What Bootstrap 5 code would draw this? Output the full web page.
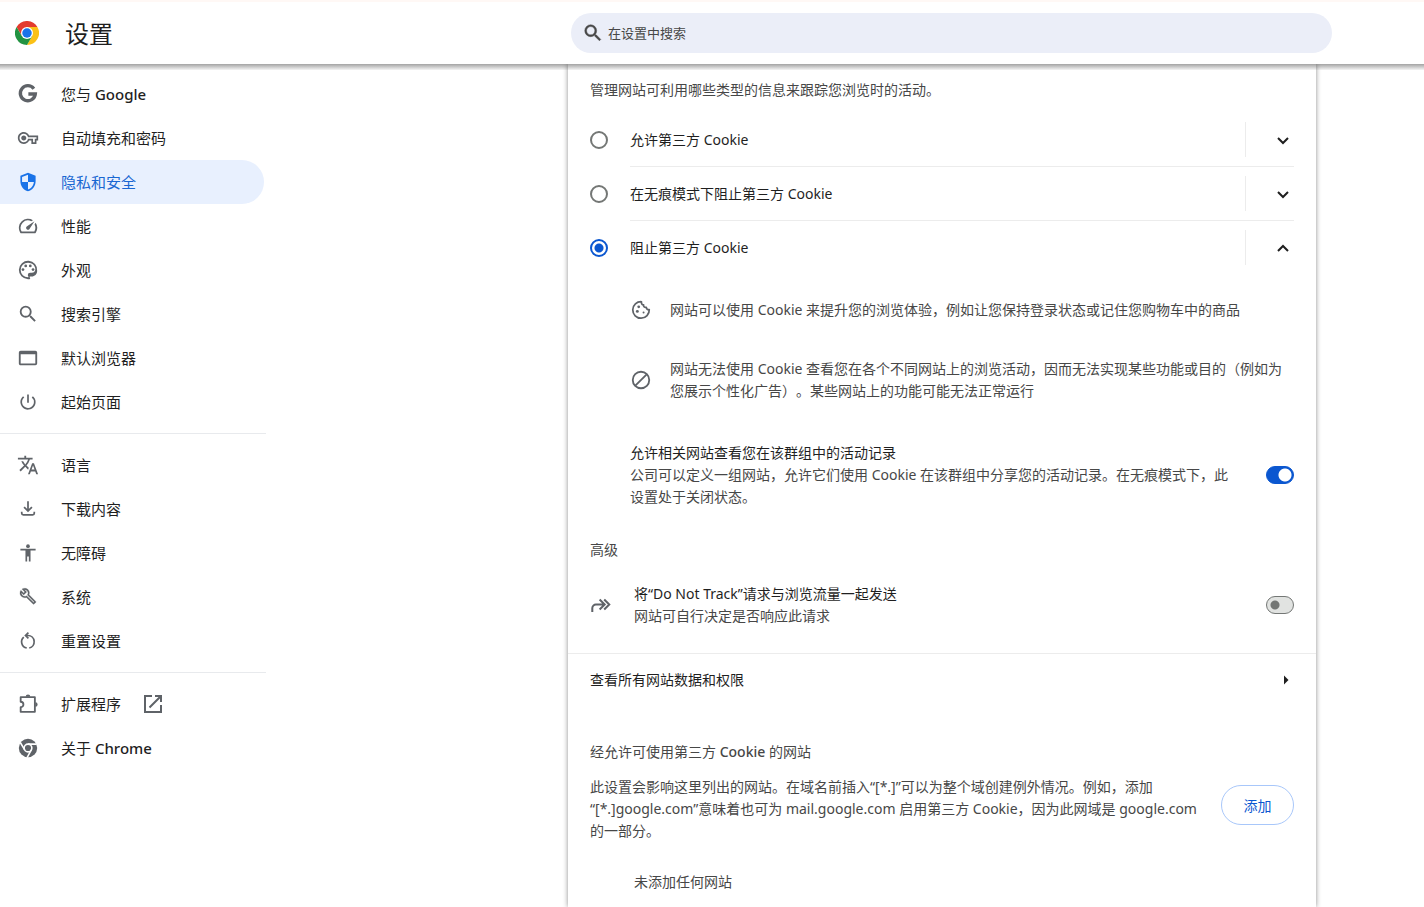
<!DOCTYPE html>
<html lang="zh-CN">
<head>
<meta charset="utf-8">
<meta name="viewport" content="width=device-width, initial-scale=1">
<title>设置</title>
<link href="https://cdn.jsdelivr.net/npm/bootstrap@5.3.0/dist/css/bootstrap.min.css" rel="stylesheet">
<style>
  body { font-family: "Noto Sans", "Noto Sans CJK SC", sans-serif; font-size: 14px; line-height: 22px; color: #1f1f1f; background: #fff; text-spacing-trim: space-all; }
  svg { display: block; flex: none; }
  .soft { color: #474747; }
  .semi { font-weight: 500; }

  .topbar { height: 64px; border-top: 2px solid #fff8f5; background: #fff; z-index: 2; }
  .topbar::after { content: ""; position: absolute; top: 100%; left: 0; right: 0; height: 6px; background: linear-gradient(rgba(0,0,0,.36), rgba(0,0,0,.04)); }
  .brand-area { padding-left: 15px; gap: 26px; }
  .brand-area h1 { font-size: 24px; line-height: 32px; font-weight: 400; padding-top: 2px; }
  .searchbox { width: 761px; height: 40px; margin-right: 92px; padding: 0 20px 0 11px; gap: 4px; background: #ebeef8; color: #474747; }
  .searchbox input { border: 0; background: none; outline: 0; padding: 0; font-size: 13px; color: #474747; }
  .searchbox input::placeholder { color: #474747; opacity: 1; }

  .side { width: 266px; padding-top: 8px; }
  .side a { height: 44px; padding-left: 17px; gap: 22px; margin-right: 2px; font-size: 15px; color: #1f1f1f; text-decoration: none; border-radius: 0 22px 22px 0; }
  .side a svg { color: #5f6368; }
  .side a.current { background: #e8f0fe; color: #1967d2; }
  .side a.current svg { color: #1a73e8; }
  .side hr { margin: 9px 0; border-color: #e8eaed; opacity: 1; }

  .panel { width: 748px; max-width: 100%; margin-right: 108px; padding: 15px 0 14px; background: #fff; box-shadow: 0 0 5px rgba(0,0,0,.45); }
  .panel h2 { font-size: 14px; line-height: 22px; font-weight: 400; }
  .inset { padding-left: 22px; padding-right: 22px; }
  .choice { gap: 22px; }
  .choice-body { height: 54px; border-bottom: 1px solid #ececec; }
  .choice.open .choice-body { border-bottom-color: transparent; }
  .expander { width: 49px; height: 35px; border: 0; border-left: 1px solid #ececec; background: none; padding: 0 0 0 26px; color: #1f1f1f; }
  .detail { gap: 18px; color: #474747; }
  .detail + .detail { margin-top: 37px; }
  .detail svg, .dnt > svg { color: #5f6368; }
  .related { margin-top: 40px; }
  .indent { padding-left: 40px; }
  .dnt { gap: 22px; }
  .section-title { margin: 31px 0 22px; }
  .allowed-title { margin: 35px 0 13px; }
  .none-yet { padding: 29px 0 0 66px; }

  input.dot { appearance: none; width: 18px; height: 18px; margin: 0; flex: none; border: 2px solid #747775; border-radius: 50%; }
  input.dot:checked { border-color: #0b57d0; background: radial-gradient(circle, #0b57d0 0 4px, transparent 5px); }
  input.toggle { appearance: none; width: 28px; height: 18px; margin: 0; flex: none; border: 1px solid #747775; border-radius: 9px; background: radial-gradient(circle at 8px 50%, #747775 0 4px, transparent 5px) #e1e3e1; }
  input.toggle:checked { border-color: #0b57d0; background: radial-gradient(circle at 18px 50%, #fff 0 6px, transparent 7px) #0b57d0; }

  .allsites { height: 53px; margin-top: 26px; border-top: 1px solid #ececec; color: #1f1f1f; text-decoration: none; }
  .add { width: 73px; height: 40px; margin-bottom: 8px; padding: 0; border: 1px solid #a8c7fa; border-radius: 20px; color: #0b57d0; font-size: 14px; }
  .add:hover { border-color: #a8c7fa; background: #f3f7fe; color: #0b57d0; }
</style>
</head>
<body>
<div class="d-flex flex-column min-vh-100">
  <header class="topbar position-relative d-flex align-items-center justify-content-between">
    <div class="brand-area d-flex align-items-center">
      <svg width="24" height="24" viewBox="0 0 48 48">
        <circle cx="24" cy="24" r="24" fill="#fff"/>
        <path fill="#e33b2e" d="M24 12h20.8A24 24 0 0 0 3.2 12l10.4 18z"/>
        <path fill="#fbc116" d="M34.4 30 24 48a24 24 0 0 0 20.8-36H24z"/>
        <path fill="#229342" d="M13.6 30 3.2 12A24 24 0 0 0 24 48l10.4-18z"/>
        <circle cx="24" cy="24" r="12" fill="#fff"/>
        <circle cx="24" cy="24" r="9.5" fill="#1a73e8"/>
      </svg>
      <h1 class="mb-0">设置</h1>
    </div>
    <label class="searchbox d-flex align-items-center rounded-pill">
      <svg width="22" height="22" viewBox="0 0 24 24" fill="currentColor" stroke="currentColor" stroke-width=".5"><path d="M15.500 14h-.79l-.28-.27A6.470 6.470 0 0 0 16 9.500 6.500 6.500 0 1 0 9.500 16c1.610 0 3.090-.59 4.230-1.570l.27.28v.79l5 4.990L20.490 19zm-6 0a4.500 4.500 0 1 1 0-9 4.500 4.500 0 0 1 0 9z"/></svg>
      <input class="flex-grow-1" type="text" placeholder="在设置中搜索" aria-label="在设置中搜索">
    </label>
  </header>

  <div class="d-flex flex-grow-1">
    <nav class="side flex-shrink-0">
      <a href="#" class="d-flex align-items-center">
        <svg width="22" height="22" viewBox="0 0 24 24" fill="none" stroke="currentColor" stroke-width="3.600"><path d="M18.400 6.200A8.200 8.200 0 1 0 20 12h-7.600" /></svg>
        <span>您与 <span class="semi">Google</span></span></a>
      <a href="#" class="d-flex align-items-center">
        <svg width="22" height="22" viewBox="-1 -1 26 26" fill="currentColor"><path d="M22 19h-6v-4h-2.680c-1.140 2.420-3.600 4-6.320 4-3.860 0-7-3.140-7-7s3.140-7 7-7c2.720 0 5.170 1.580 6.320 4H24v6h-2v4zm-4-2h2v-4h2v-2H11.940l-.23-.67C11.010 8.340 9.110 7 7 7c-2.760 0-5 2.240-5 5s2.240 5 5 5c2.110 0 4.010-1.340 4.710-3.330l.23-.67H18v4zM7 15c-1.650 0-3-1.350-3-3s1.350-3 3-3 3 1.350 3 3-1.350 3-3 3z"/></svg>
        自动填充和密码</a>
      <a href="#" class="d-flex align-items-center current" aria-current="page">
        <svg width="22" height="22" viewBox="-1 -1 26 26" fill="currentColor"><path d="M12 1 3 4.500V11c0 5.550 3.840 10.740 9 12 5.160-1.260 9-6.450 9-12V4.500zm0 10.990h7c-.53 4.120-3.280 7.790-7 8.940V12H5V6l7-2.700z"/></svg>
        隐私和安全</a>
      <a href="#" class="d-flex align-items-center">
        <svg width="22" height="22" viewBox="0 0 24 24" fill="currentColor"><path d="m20.380 8.570-1.230 1.850a8 8 0 0 1-.22 7.580H5.070A8 8 0 0 1 15.580 6.850l1.850-1.230A10 10 0 0 0 3.350 19a2 2 0 0 0 1.720 1h13.850a2 2 0 0 0 1.740-1 10 10 0 0 0-.27-10.440zm-9.790 6.840a2 2 0 0 0 2.830 0l5.660-8.490-8.490 5.660a2 2 0 0 0 0 2.830z"/></svg>
        性能</a>
      <a href="#" class="d-flex align-items-center">
        <svg width="22" height="22" viewBox="0 0 24 24" fill="currentColor"><path d="M12 22a10 10 0 1 1 10-9c0 3.300-2.700 6-6 6h-1.800c-.3 0-.5.200-.5.500 0 .1.100.2.100.3.400.5.600 1.100.6 1.700A2.400 2.400 0 0 1 12 22zm0-18a8 8 0 0 0 0 16 .5.5 0 0 0 .5-.5.600.600 0 0 0-.1-.4c-.4-.5-.6-1.100-.6-1.600a2.500 2.500 0 0 1 2.500-2.500H16a4 4 0 0 0 4-4C20 7.100 16.400 4 12 4z"/><circle cx="6.500" cy="11.500" r="1.500"/><circle cx="9.500" cy="7.500" r="1.500"/><circle cx="14.500" cy="7.500" r="1.500"/><circle cx="17.500" cy="11.500" r="1.500"/></svg>
        外观</a>
      <a href="#" class="d-flex align-items-center">
        <svg width="22" height="22" viewBox="0 0 24 24" fill="currentColor"><path d="M15.500 14h-.79l-.28-.27A6.470 6.470 0 0 0 16 9.500 6.500 6.500 0 1 0 9.500 16c1.610 0 3.090-.59 4.230-1.570l.27.28v.79l5 4.990L20.490 19zm-6 0a4.500 4.500 0 1 1 0-9 4.500 4.500 0 0 1 0 9z"/></svg>
        搜索引擎</a>
      <a href="#" class="d-flex align-items-center">
        <svg width="22" height="22" viewBox="0 0 24 24" fill="currentColor"><path d="M20 4H4a2 2 0 0 0-2 2v12c0 1.100.9 2 2 2h16a2 2 0 0 0 2-2V6a2 2 0 0 0-2-2zm0 14H4V8h16z"/></svg>
        默认浏览器</a>
      <a href="#" class="d-flex align-items-center">
        <svg width="22" height="22" viewBox="-1 -1 26 26" fill="currentColor"><path d="M13 3h-2v10h2zm4.830 2.170-1.420 1.420A6.920 6.920 0 0 1 19 12a7 7 0 1 1-11.420-5.420L6.170 5.170A9 9 0 1 0 21 12c0-2.740-1.230-5.180-3.170-6.830z"/></svg>
        起始页面</a>
      <hr>
      <a href="#" class="d-flex align-items-center">
        <svg width="22" height="22" viewBox="0 0 24 24" fill="currentColor"><path d="m12.870 15.070-2.540-2.510.03-.03A17.520 17.520 0 0 0 14.070 6H17V4h-7V2H8v2H1v2h11.170C11.500 7.920 10.440 9.750 9 11.350 8.070 10.320 7.300 9.190 6.690 8h-2c.73 1.630 1.730 3.170 2.980 4.560l-5.090 5.020L4 19l5-5 3.110 3.110zM18.500 10h-2L12 22h2l1.120-3h4.750L21 22h2zm-2.620 7 1.620-4.330L19.120 17z"/></svg>
        语言</a>
      <a href="#" class="d-flex align-items-center">
        <svg width="22" height="22" viewBox="-2 -1 28 28" fill="none" stroke="currentColor" stroke-width="2.200"><path d="M12 3v12M7 10.500l5 5 5-5M4 16.500v2a2 2 0 0 0 2 2h12a2 2 0 0 0 2-2v-2"/></svg>
        下载内容</a>
      <a href="#" class="d-flex align-items-center">
        <svg width="22" height="22" viewBox="-1 -1 26 26" fill="currentColor"><path d="M21 9h-6v13h-2v-6h-2v6H9V9H3V7h18z"/><circle cx="12" cy="4" r="2.200"/></svg>
        无障碍</a>
      <a href="#" class="d-flex align-items-center">
        <svg width="22" height="22" viewBox="-3 -2 30 30" fill="currentColor" stroke="currentColor" stroke-width=".3"><path d="M22.610 18.990l-9.080-9.080c.93-2.340.45-5.100-1.440-7C9.790.61 6.210.4 3.660 2.260L7.500 6.110 6.080 7.520 2.250 3.690C.39 6.230.6 9.820 2.900 12.110c1.860 1.860 4.570 2.350 6.890 1.480l9.110 9.110c.39.39 1.020.39 1.410 0l2.300-2.300c.4-.38.4-1.010 0-1.410zm-3 1.600l-9.460-9.460c-.61.45-1.290.72-2 .82-1.360.2-2.790-.21-3.830-1.250C3.370 9.760 2.930 8.500 3 7.260l3.090 3.090 4.240-4.240-3.090-3.090c1.240-.07 2.490.37 3.440 1.310 1.080 1.080 1.490 2.570 1.240 3.960-.12.71-.42 1.370-.88 1.960l9.450 9.450-.88.89z"/></svg>
        系统</a>
      <a href="#" class="d-flex align-items-center">
        <svg width="22" height="22" viewBox="-1 -1 26 26" fill="none" stroke="currentColor" stroke-width="2"><path d="M10.500 20.300A7.500 7.500 0 0 1 7 7.300M13.500 20.300A7.500 7.500 0 0 0 12 5.500H9.500M12.500 2 9 5.500 12.500 9"/></svg>
        重置设置</a>
      <hr>
      <a href="#" class="d-flex align-items-center">
        <svg width="22" height="22" viewBox="0 0 24 24" fill="none" stroke="currentColor" stroke-width="2" stroke-linejoin="round"><path d="M4 4.500h15.500v16H4v-5a3 3 0 0 0 0-6z"/><path fill="currentColor" stroke="none" d="M9.500 4a2.500 2.500 0 0 1 5 0zM20 10a2.500 2.500 0 0 1 0 5z"/></svg>
        扩展程序
        <svg width="20" height="20" viewBox="2 2 20 20" fill="none" stroke="currentColor" stroke-width="2"><path d="M11 4H4v16h16v-7M14 4h6v6M20 4 8.500 15.500"/></svg></a>
      <a href="#" class="d-flex align-items-center">
        <svg width="22" height="22" viewBox="0 0 24 24"><circle cx="12" cy="12" r="10" fill="#5f6368"/><g fill="none" stroke="#fff" stroke-width="1.700"><circle cx="12" cy="12" r="4.200"/><path d="M12 7.800h9.500M8.400 14.100 3.600 6M15.600 14.100 11 22.500"/></g></svg>
        <span>关于 <span class="semi">Chrome</span></span></a>
    </nav>

    <main class="panel ms-auto">
      <p class="inset soft mb-0">管理网站可利用哪些类型的信息来跟踪您浏览时的活动。</p>

      <div class="inset mt-2 pt-1">
        <div class="choice d-flex align-items-center">
          <input class="dot" type="radio" name="cookies" id="c1">
          <div class="choice-body flex-grow-1 d-flex align-items-center justify-content-between">
            <label for="c1">允许第三方 Cookie</label>
            <button class="expander" type="button" aria-label="展开"><svg width="22" height="22" viewBox="0 0 22 22" fill="none" stroke="currentColor" stroke-width="2"><path d="m6 9 5 5 5-5"/></svg></button>
          </div>
        </div>
        <div class="choice d-flex align-items-center">
          <input class="dot" type="radio" name="cookies" id="c2">
          <div class="choice-body flex-grow-1 d-flex align-items-center justify-content-between">
            <label for="c2">在无痕模式下阻止第三方 Cookie</label>
            <button class="expander" type="button" aria-label="展开"><svg width="22" height="22" viewBox="0 0 22 22" fill="none" stroke="currentColor" stroke-width="2"><path d="m6 9 5 5 5-5"/></svg></button>
          </div>
        </div>
        <div class="choice open d-flex align-items-center">
          <input class="dot" type="radio" name="cookies" id="c3" checked>
          <div class="choice-body flex-grow-1 d-flex align-items-center justify-content-between">
            <label for="c3">阻止第三方 Cookie</label>
            <button class="expander" type="button" aria-label="收起"><svg width="22" height="22" viewBox="0 0 22 22" fill="none" stroke="currentColor" stroke-width="2"><path d="m6 14 5-5 5 5"/></svg></button>
          </div>
        </div>

        <div class="indent pt-4">
          <div class="detail d-flex align-items-center">
            <svg width="22" height="22" viewBox="0 0 24 24" fill="none" stroke="currentColor" stroke-width="1.900" stroke-linejoin="round"><path d="M12.500 3A9 9 0 1 0 21 11.500c-1.800.3-3-.5-3.200-2.300-2 .3-3.300-.8-3-2.700-1.700-.2-2.600-1.500-2.300-3.500z"/><g fill="currentColor" stroke="none"><circle cx="9.500" cy="8.500" r="1.500"/><circle cx="8" cy="13.500" r="1.600"/><circle cx="14.800" cy="14.800" r="1.100"/></g></svg>
            <span>网站可以使用 Cookie 来提升您的浏览体验，例如让您保持登录状态或记住您购物车中的商品</span>
          </div>
          <div class="detail d-flex align-items-center">
            <svg width="22" height="22" viewBox="0 0 24 24" fill="none" stroke="currentColor" stroke-width="2"><circle cx="12" cy="12" r="9"/><path d="m5.800 18.200 12.400-12.400"/></svg>
            <span>网站无法使用 Cookie 查看您在各个不同网站上的浏览活动，因而无法实现某些功能或目的（例如为<br>您展示个性化广告）。某些网站上的功能可能无法正常运行</span>
          </div>
          <label class="related d-flex align-items-center justify-content-between">
            <span>允许相关网站查看您在该群组中的活动记录<br><span class="soft">公司可以定义一组网站，允许它们使用 Cookie 在该群组中分享您的活动记录。在无痕模式下，此<br>设置处于关闭状态。</span></span>
            <input class="toggle" type="checkbox" role="switch" checked>
          </label>
        </div>
      </div>

      <h2 class="inset soft section-title">高级</h2>
      <label class="dnt inset d-flex align-items-center">
        <svg width="22" height="22" viewBox="0 0 24 24" fill="none" stroke="currentColor" stroke-width="2.200"><path d="M2.500 19.500v-4a4 4 0 0 1 4-4H15M10.500 6l5.500 5.500-5.500 5.500M15.500 6l5.500 5.500-5.500 5.500"/></svg>
        <span class="flex-grow-1">将“Do Not Track”请求与浏览流量一起发送<br><span class="soft">网站可自行决定是否响应此请求</span></span>
        <input class="toggle" type="checkbox" role="switch">
      </label>

      <a href="#" class="allsites inset d-flex align-items-center justify-content-between">查看所有网站数据和权限
        <svg width="16" height="16" viewBox="0 0 16 16" fill="currentColor"><path d="M6 3.500 10.500 8 6 12.500z"/></svg></a>

      <h2 class="inset soft allowed-title">经允许可使用第三方 <span class="semi">Cookie</span> 的网站</h2>
      <div class="inset soft d-flex align-items-center justify-content-between">
        <span>此设置会影响这里列出的网站。在域名前插入“[*.]”可以为整个域创建例外情况。例如，添加<br>“[*.]google.com”意味着也可为 mail.google.com 启用第三方 Cookie，因为此网域是 google.com<br>的一部分。</span>
        <button class="btn add flex-shrink-0" type="button">添加</button>
      </div>
      <p class="soft mb-0 none-yet">未添加任何网站</p>
    </main>
  </div>
</div>
<script src="https://cdn.jsdelivr.net/npm/bootstrap@5.3.0/dist/js/bootstrap.bundle.min.js"></script>
</body>
</html>
